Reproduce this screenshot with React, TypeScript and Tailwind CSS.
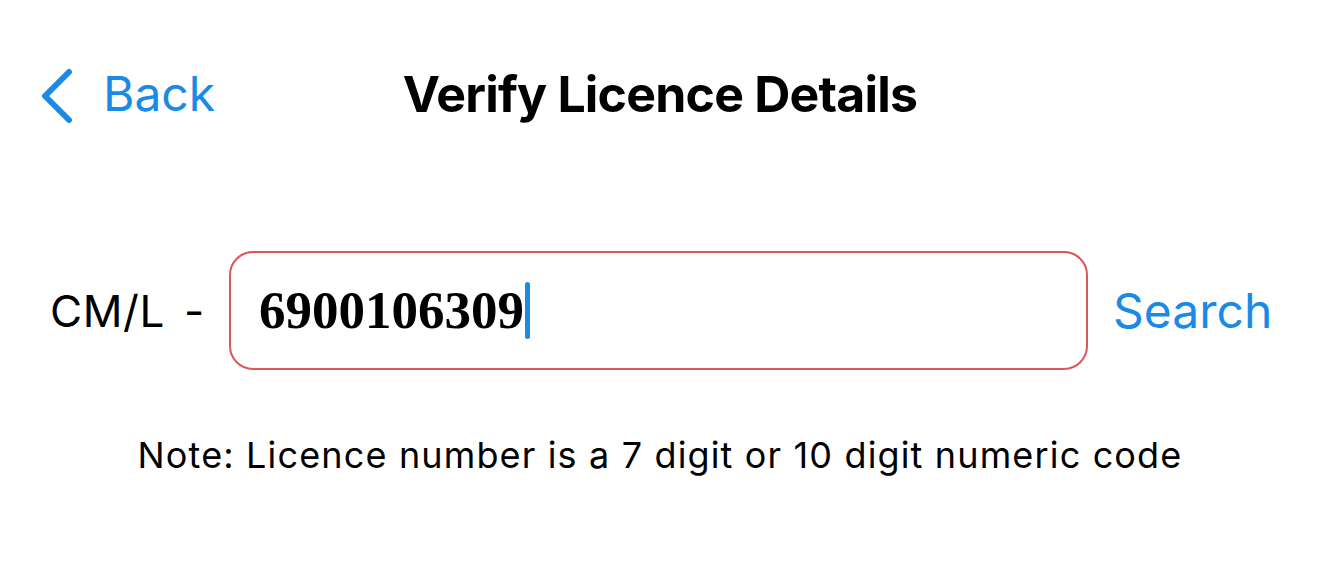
import React from "react";

export default function App() {
  return (
    <div className="w-[1320px] h-[580px] bg-white overflow-hidden text-black" style={{ fontFamily: 'Inter, "Liberation Sans", Arial, sans-serif' }}>
      <div className="grid grid-cols-[1fr_auto_1fr] items-start pt-[68px]">
        <div className="flex items-start pl-[40px]">
          <svg width="34" height="56" viewBox="0 0 34 56" className="mr-[29px]">
            <path d="M29 4 L5 28 L29 52" fill="none" stroke="#1a8ae6" strokeWidth="6" strokeLinecap="round" strokeLinejoin="round" />
          </svg>
          <span className="text-[48px] leading-none text-[#1a8ae6] mt-[2px]">Back</span>
        </div>
        <div className="text-[50px] leading-none font-bold tracking-[-0.8px] mt-[1px]">Verify Licence Details</div>
        <div />
      </div>
      <div className="flex items-center pl-[50px] mt-[127px]">
        <span className="w-[179px] text-[44px] leading-none tracking-[0.6px] whitespace-pre">CM/L<span className="ml-[6px]"> -</span></span>
        <div className="w-[859px] h-[119px] border-2 border-[#d9595b] rounded-[24px] flex items-center pl-[28px]">
          <span className="text-[53px] font-bold leading-none" style={{ fontFamily: '"Liberation Serif", serif' }}>6900106309</span>
          <span className="w-[5px] h-[57px] bg-[#1a8ae6] rounded-full ml-[1px]" />
        </div>
        <span className="text-[48px] leading-none text-[#1a8ae6] ml-[25px]">Search</span>
      </div>
      <div className="mt-[67px] text-center text-[36px] leading-none tracking-[1.15px]">Note: Licence number is a 7 digit or 10 digit numeric code</div>
    </div>
  );
}
